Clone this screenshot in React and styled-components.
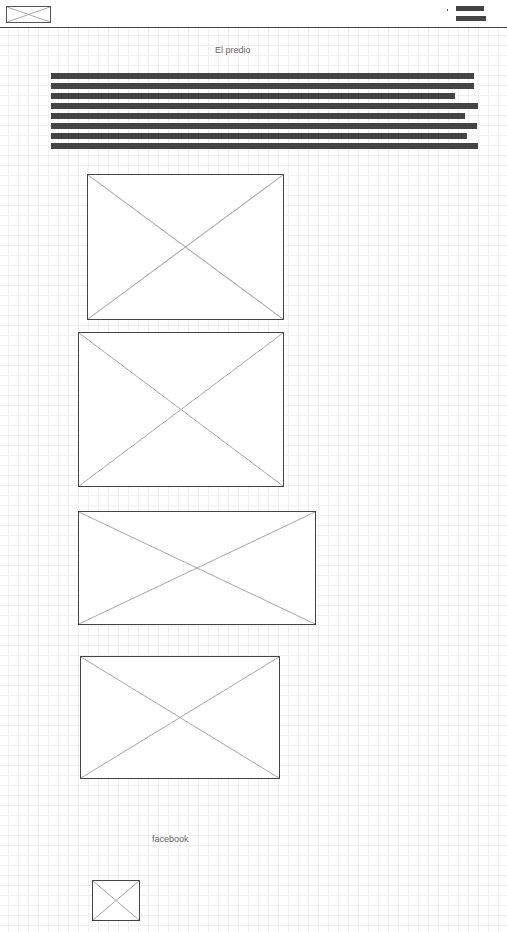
import styled, { createGlobalStyle } from "styled-components";

const GlobalStyle = createGlobalStyle`
  html, body {
    margin: 0;
    padding: 0;
    background: #fff;
    font-family: "Liberation Sans", Arial, sans-serif;
  }
`;

const Page = styled.div`
  width: 507px;
  min-height: 932px;
  display: flex;
  flex-direction: column;
`;

const Header = styled.header`
  box-sizing: border-box;
  height: 28px;
  border-bottom: 1px solid #444;
  display: flex;
  align-items: flex-start;
  justify-content: space-between;
  padding: 6px 21px 0 6px;
  background: #fff;
`;

const Menu = styled.div`
  display: flex;
  align-items: flex-start;
  gap: 8px;
`;

const Dot = styled.span`
  width: 1px;
  height: 2px;
  margin-top: 3px;
  background: #555;
`;

const Bars = styled.div`
  display: flex;
  flex-direction: column;
  gap: 5px;
`;

const Bar = styled.div`
  height: 5px;
  width: ${(p) => p.$w}px;
  background: #444;
`;

const Main = styled.main`
  flex: 1;
  display: flex;
  flex-direction: column;
  align-items: flex-start;
  padding-bottom: 11px;
  background-color: #fff;
  background-image: linear-gradient(to right, #f1f1f1 1px, transparent 1px),
    linear-gradient(to bottom, #f1f1f1 1px, transparent 1px);
  background-size: 10px 10px;
  background-position: 8px 7px;
`;

const Title = styled.div`
  margin: 17px 0 0 215px;
  font-size: 9px;
  line-height: 11px;
  color: #666;
`;

const TextBlock = styled.div`
  margin: 17px 0 0 51px;
  display: flex;
  flex-direction: column;
  gap: 4px;
`;

const TextLine = styled.div`
  height: 6px;
  width: ${(p) => p.$w}px;
  background: #444;
`;

const Frame = styled.div`
  box-sizing: border-box;
  width: ${(p) => p.$w}px;
  height: ${(p) => p.$h}px;
  margin-top: ${(p) => p.$top}px;
  margin-left: ${(p) => p.$left}px;
  border: 1px solid ${(p) => p.$border || "#444"};
  background: #fff;

  svg {
    display: block;
    width: 100%;
    height: 100%;
  }
`;

const Caption = styled.div`
  margin: 55px 0 0 152px;
  font-size: 9px;
  line-height: 11px;
  color: #666;
`;

const Placeholder = ({ w, h, top = 0, left = 0, border }) => (
  <Frame $w={w} $h={h} $top={top} $left={left} $border={border}>
    <svg viewBox="0 0 100 100" preserveAspectRatio="none">
      <line x1="0" y1="0" x2="100" y2="100" stroke="#a8a8a8" strokeWidth="1" vectorEffect="non-scaling-stroke" />
      <line x1="100" y1="0" x2="0" y2="100" stroke="#a8a8a8" strokeWidth="1" vectorEffect="non-scaling-stroke" />
    </svg>
  </Frame>
);

const lines = [423, 423, 404, 427, 414, 426, 416, 427];

const images = [
  { w: 197, h: 146, top: 25, left: 87 },
  { w: 206, h: 155, top: 12, left: 78 },
  { w: 238, h: 114, top: 24, left: 78 },
  { w: 200, h: 123, top: 31, left: 80 },
];

export default function App() {
  return (
    <Page>
      <GlobalStyle />
      <Header>
        <Placeholder w={45} h={17} border="#555" />
        <Menu>
          <Dot />
          <Bars>
            <Bar $w={28} />
            <Bar $w={30} />
          </Bars>
        </Menu>
      </Header>
      <Main>
        <Title>El predio</Title>
        <TextBlock>
          {lines.map((w, i) => (
            <TextLine key={i} $w={w} />
          ))}
        </TextBlock>
        {images.map((img, i) => (
          <Placeholder key={i} {...img} />
        ))}
        <Caption>facebook</Caption>
        <Placeholder w={48} h={41} top={35} left={92} />
      </Main>
    </Page>
  );
}
